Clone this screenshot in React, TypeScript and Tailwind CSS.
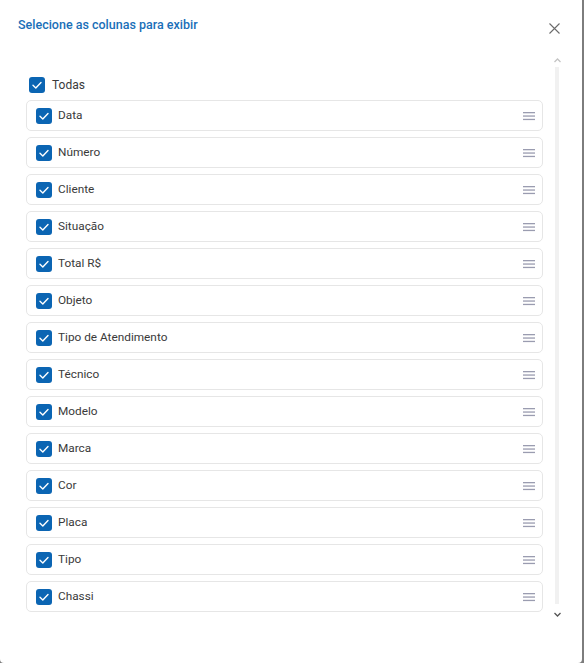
import React, { useState } from 'react';

const COLUMNS = [
  'Data',
  'Número',
  'Cliente',
  'Situação',
  'Total R$',
  'Objeto',
  'Tipo de Atendimento',
  'Técnico',
  'Modelo',
  'Marca',
  'Cor',
  'Placa',
  'Tipo',
  'Chassi',
];

function CheckBox({ checked, onChange }: { checked: boolean; onChange: () => void }) {
  return (
    <button
      type="button"
      onClick={onChange}
      className={`w-4 h-4 rounded-[3px] flex items-center justify-center shrink-0 ${
        checked ? 'bg-[#0b65b3]' : 'bg-white border border-[#9ca3af]'
      }`}
    >
      {checked && (
        <svg width="16" height="16" viewBox="0 0 16 16" fill="none">
          <path d="M4 8.3 L6.8 10.9 L12 5.4" stroke="white" strokeWidth="1.4" strokeLinecap="round" strokeLinejoin="round" />
        </svg>
      )}
    </button>
  );
}

function DragHandle() {
  return (
    <svg width="12" height="10" viewBox="0 0 12 10" className="shrink-0">
      <rect x="0" y="1" width="12" height="1.3" fill="#9a9cb0" />
      <rect x="0" y="4.4" width="12" height="1.3" fill="#9a9cb0" />
      <rect x="0" y="7.8" width="12" height="1.3" fill="#9a9cb0" />
    </svg>
  );
}

export default function App() {
  const [selected, setSelected] = useState<string[]>(COLUMNS);
  const allChecked = selected.length === COLUMNS.length;

  const toggle = (col: string) =>
    setSelected((s) => (s.includes(col) ? s.filter((c) => c !== col) : [...s, col]));

  return (
    <div className="w-[584px] h-[663px] bg-[#7d7d7d] font-['Roboto',sans-serif]">
      <div className="w-[582px] h-[663px] bg-white rounded-b-[4px] flex flex-col">
        {/* header */}
        <div className="flex items-start justify-between pl-[18px] pr-[22px] pt-[16px]">
          <h2 className="text-[12.5px] leading-[18px] font-medium text-[#1a6fb8]">
            Selecione as colunas para exibir
          </h2>
          <button type="button" className="mt-[7px]">
            <svg width="11" height="11" viewBox="0 0 11 11">
              <path d="M0.5 0.5 L10.5 10.5 M10.5 0.5 L0.5 10.5" stroke="#6b6b6b" strokeWidth="1.1" />
            </svg>
          </button>
        </div>

        <div className="flex mt-[22px] pl-[26px]">
          {/* list */}
          <div className="w-[517px] flex flex-col">
            <div className="flex items-center gap-[7px] pl-[3px] h-[16px] mt-[21px]">
              <CheckBox
                checked={allChecked}
                onChange={() => setSelected(allChecked ? [] : COLUMNS)}
              />
              <span className="text-[12px] text-[#3a3a3a]">Todas</span>
            </div>
            <div className="flex flex-col gap-[6px] mt-[7px]">
              {COLUMNS.map((col) => (
                <div
                  key={col}
                  className="h-[31px] border border-[#e6e6e6] rounded-[5px] flex items-center pl-[9px] pr-[7px]"
                >
                  <CheckBox checked={selected.includes(col)} onChange={() => toggle(col)} />
                  <span className="ml-[6px] text-[11.8px] text-[#3a3a3a] flex-1">{col}</span>
                  <DragHandle />
                </div>
              ))}
            </div>
          </div>

          {/* scrollbar */}
          <div className="ml-[11px] w-[6px] flex flex-col items-center">
            <svg width="7" height="5" viewBox="0 0 7 5" className="mt-[2px]">
              <path d="M0.5 4 L3.5 1 L6.5 4" stroke="#c4c4c4" strokeWidth="1.3" fill="none" />
            </svg>
            <div className="w-[4px] h-[537px] bg-[#f1f1f1] mt-[4px]" />
            <svg width="7" height="5" viewBox="0 0 7 5" className="mt-[8px]">
              <path d="M0.5 1 L3.5 4 L6.5 1" stroke="#555" strokeWidth="1.3" fill="none" />
            </svg>
          </div>
        </div>
      </div>
    </div>
  );
}
